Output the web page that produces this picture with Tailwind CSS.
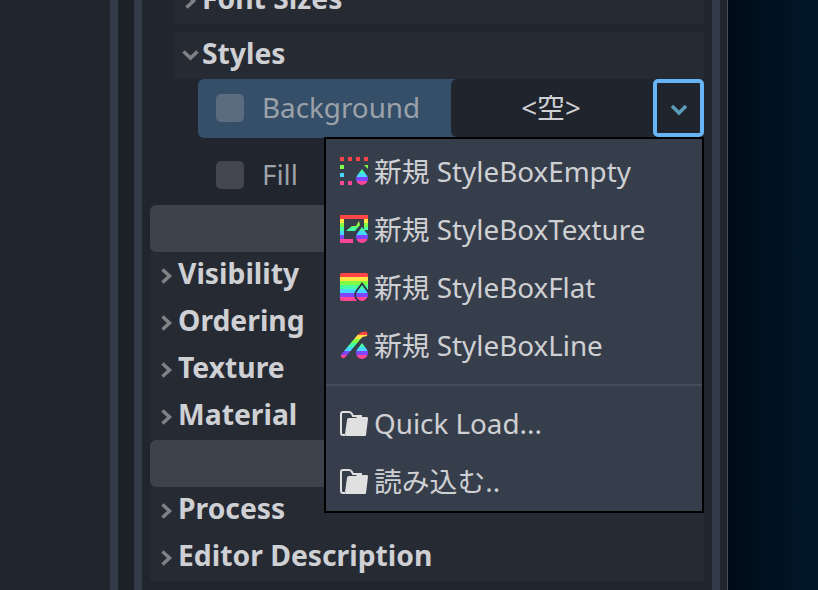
<!DOCTYPE html>
<html lang="ja">
<head>
  <meta charset="UTF-8" />
  <title>Inspector</title>
  <script src="https://cdn.jsdelivr.net/npm/@tailwindcss/browser@4"></script>
</head>
<body class="w-[818px] h-[590px] overflow-hidden bg-[#21252d] font-['Noto_Sans','Noto_Sans_CJK_JP',sans-serif] text-[27.8px] text-[#cfd0d3]">

  <!-- shared rainbow, 4px bands -->
  <svg class="absolute w-0 h-0">
    <defs>
      <linearGradient id="rainbow" gradientUnits="userSpaceOnUse" x1="0" y1="0" x2="0" y2="28">
        <stop offset="0" stop-color="#ff4545"/><stop offset="0.143" stop-color="#ff4545"/>
        <stop offset="0.143" stop-color="#ffe345"/><stop offset="0.286" stop-color="#ffe345"/>
        <stop offset="0.286" stop-color="#80ff45"/><stop offset="0.429" stop-color="#80ff45"/>
        <stop offset="0.429" stop-color="#45ffa2"/><stop offset="0.571" stop-color="#45ffa2"/>
        <stop offset="0.571" stop-color="#45d7ff"/><stop offset="0.714" stop-color="#45d7ff"/>
        <stop offset="0.714" stop-color="#8045ff"/><stop offset="0.857" stop-color="#8045ff"/>
        <stop offset="0.857" stop-color="#ff4596"/><stop offset="1" stop-color="#ff4596"/>
      </linearGradient>
    </defs>
  </svg>

  <div class="flex h-full">
    <!-- left docks -->
    <div class="w-[110px] bg-[#21252d]"></div>
    <div class="w-2 bg-[#343b48]"></div>
    <div class="w-4 bg-[#1c2027]"></div>
    <div class="w-2 bg-[#343b48]"></div>

    <!-- inspector -->
    <div class="relative w-[570px] px-2 bg-[#21252d]">
      <div class="ml-6 h-6 overflow-hidden bg-[#262a33]">
        <div class="-mt-[23px] flex h-[47px] items-center text-[28.3px] font-bold">
          <svg class="ml-2 mr-1 w-4 h-4" viewBox="0 0 16 16"><path d="M4.5 1.5l7 6.5-7 6.5" fill="none" stroke="#808285" stroke-width="3.5"/></svg>
          <span class="pb-[4px]">Font Sizes</span>
        </div>
      </div>
      <div class="ml-6 mt-2 flex h-[47px] items-center bg-[#262a33] text-[28.3px] font-bold">
        <svg class="ml-2 mr-[3px] w-[17px] h-[17px]" viewBox="0 0 17 17"><path d="M1.5 4.5l7 6.5 7-6.5" fill="none" stroke="#808285" stroke-width="3.5"/></svg>
        <span class="pb-[4px]">Styles</span>
      </div>

      <!-- Background row -->
      <div class="ml-12 flex h-[59px]">
        <div class="flex w-[261px] items-center rounded-l-md bg-[#364f69] pb-px">
          <div class="ml-[18px] w-7 h-7 rounded-[5px] bg-[#5b6b80]"></div>
          <span class="ml-[18px] text-[#9ca2a9]">Background</span>
        </div>
        <div class="-ml-2 flex w-[202px] items-center justify-center rounded-l-md bg-[#20242c] mb-px pr-[2px]">&lt;空&gt;</div>
        <div class="flex w-[51px] items-center justify-center rounded-[5px] border-4 border-[#66b3f5] bg-[#20242c] mb-px">
          <svg class="mt-1 w-[18px] h-3" viewBox="0 0 18 12"><path d="M2 2l7 7 7-7" fill="none" stroke="#5a9cb8" stroke-width="3.5"/></svg>
        </div>
      </div>

      <!-- Fill row -->
      <div class="ml-12 flex h-[67px] items-center pt-[7px]">
        <div class="ml-[18px] w-7 h-7 rounded-[5px] bg-[#44474f]"></div>
        <span class="ml-[18px] text-[#9ca2a9]">Fill</span>
      </div>

      <div class="h-[47px] rounded-md bg-[#3e424b]"></div>
      <div class="bg-[#262a33] text-[28.3px] font-bold">
        <div class="flex h-[47px] items-center"><svg class="ml-2 mr-1 w-4 h-4" viewBox="0 0 16 16"><path d="M4.5 1.5l7 6.5-7 6.5" fill="none" stroke="#808285" stroke-width="3.5"/></svg><span class="pb-[4px]">Visibility</span></div>
        <div class="flex h-[47px] items-center"><svg class="ml-2 mr-1 w-4 h-4" viewBox="0 0 16 16"><path d="M4.5 1.5l7 6.5-7 6.5" fill="none" stroke="#808285" stroke-width="3.5"/></svg><span class="pb-[4px]">Ordering</span></div>
        <div class="flex h-[47px] items-center"><svg class="ml-2 mr-1 w-4 h-4" viewBox="0 0 16 16"><path d="M4.5 1.5l7 6.5-7 6.5" fill="none" stroke="#808285" stroke-width="3.5"/></svg><span class="pb-[4px]">Texture</span></div>
        <div class="flex h-[47px] items-center"><svg class="ml-2 mr-1 w-4 h-4" viewBox="0 0 16 16"><path d="M4.5 1.5l7 6.5-7 6.5" fill="none" stroke="#808285" stroke-width="3.5"/></svg><span class="pb-[4px]">Material</span></div>
      </div>
      <div class="h-[47px] rounded-md bg-[#3e424b]"></div>
      <div class="bg-[#262a33] text-[28.3px] font-bold">
        <div class="flex h-[47px] items-center"><svg class="ml-2 mr-1 w-4 h-4" viewBox="0 0 16 16"><path d="M4.5 1.5l7 6.5-7 6.5" fill="none" stroke="#808285" stroke-width="3.5"/></svg><span class="pb-[4px]">Process</span></div>
        <div class="flex h-[47px] items-center"><svg class="ml-2 mr-1 w-4 h-4" viewBox="0 0 16 16"><path d="M4.5 1.5l7 6.5-7 6.5" fill="none" stroke="#808285" stroke-width="3.5"/></svg><span class="pb-[4px]">Editor Description</span></div>
      </div>

      <!-- popup menu -->
      <div class="absolute left-[182px] top-[137px] w-[380px] h-[376px] border-2 border-black bg-[#373e4b] text-[#cfd0d3]">
        <div class="flex h-[58px] mt-[3px] items-center pl-[14px]">
          <svg class="w-7 h-7 shrink-0" viewBox="0 0 28 28" fill="url(#rainbow)">
            <path d="M0 0h4v4H0zM8 0h4v4H8zM16 0h4v4h-4zM24 0h4v4h-4zM0 8h4v4H0zM0 16h4v4H0zM0 24h4v4H0zM8 24h4v4H8zM24 8h4v4z"/>
            <path d="M22 12L17.5 18A6 6 0 1 0 26.5 18Z"/>
          </svg>
          <span class="ml-[6px] pt-[2px]">新規 StyleBoxEmpty</span>
        </div>
        <div class="flex h-[58px] items-center pl-[14px]">
          <svg class="w-7 h-7 shrink-0" viewBox="0 0 28 28" fill="url(#rainbow)">
            <path d="M26 15V2H2V26H13" fill="none" stroke="url(#rainbow)" stroke-width="4"/>
            <path d="M6 16L12 11H16L19 6L20 10L15 16Z"/>
            <path d="M22 12L17.5 18A6 6 0 1 0 26.5 18Z"/>
          </svg>
          <span class="ml-[6px] pt-[2px]">新規 StyleBoxTexture</span>
        </div>
        <div class="flex h-[58px] items-center pl-[14px]">
          <svg class="w-7 h-7 shrink-0" viewBox="0 0 28 28" fill="url(#rainbow)">
            <rect width="28" height="28" rx="2"/>
            <path d="M22 12L17.5 18A6 6 0 1 0 26.5 18Z" stroke="#2c323d" stroke-width="3.5"/>
            <path d="M22 12L17.5 18A6 6 0 1 0 26.5 18Z"/>
          </svg>
          <span class="ml-[6px] pt-[2px]">新規 StyleBoxFlat</span>
        </div>
        <div class="flex h-[58px] items-center pl-[14px]">
          <svg class="w-7 h-7 shrink-0" viewBox="0 0 28 28" fill="url(#rainbow)">
            <path d="M3.5 24.5L20 5Q22 3 25 3" fill="none" stroke="url(#rainbow)" stroke-width="5" stroke-linecap="round"/>
            <path d="M22 12L17.5 18A6 6 0 1 0 26.5 18Z"/>
          </svg>
          <span class="ml-[6px] pt-[2px]">新規 StyleBoxLine</span>
        </div>
        <div class="mt-[10px] mb-[9px] h-[2px] bg-[#464c59]"></div>
        <div class="flex h-[58px] items-center pl-[14px]">
          <svg class="w-7 h-7 shrink-0" viewBox="0 0 28 28">
            <path d="M5 25H3Q1 25 1 23V4Q1 2 3 2H9Q11 2 12 4L13 6H22" fill="none" stroke="#e0e0e0" stroke-width="2"/>
            <path d="M9 8H16L17 7H27Q28 7 28 9L26 25Q26 26 25 26H6Q5 26 5 24L7 10Q7 8 9 8Z" fill="#e0e0e0"/>
          </svg>
          <span class="ml-[6px]">Quick Load...</span>
        </div>
        <div class="flex h-[58px] items-center pl-[14px]">
          <svg class="w-7 h-7 shrink-0" viewBox="0 0 28 28">
            <path d="M5 25H3Q1 25 1 23V4Q1 2 3 2H9Q11 2 12 4L13 6H22" fill="none" stroke="#e0e0e0" stroke-width="2"/>
            <path d="M9 8H16L17 7H27Q28 7 28 9L26 25Q26 26 25 26H6Q5 26 5 24L7 10Q7 8 9 8Z" fill="#e0e0e0"/>
          </svg>
          <span class="ml-[6px]">読み込む..</span>
        </div>
      </div>
    </div>

    <!-- right docks -->
    <div class="w-2 bg-[#343b48]"></div>
    <div class="w-[7px] bg-[#21252d]"></div>
    <div class="w-px bg-[#4a4f59]"></div>
    <div class="flex-1 bg-gradient-to-r from-[#000c17] to-[#01182a]"></div>
  </div>
</body>
</html>
